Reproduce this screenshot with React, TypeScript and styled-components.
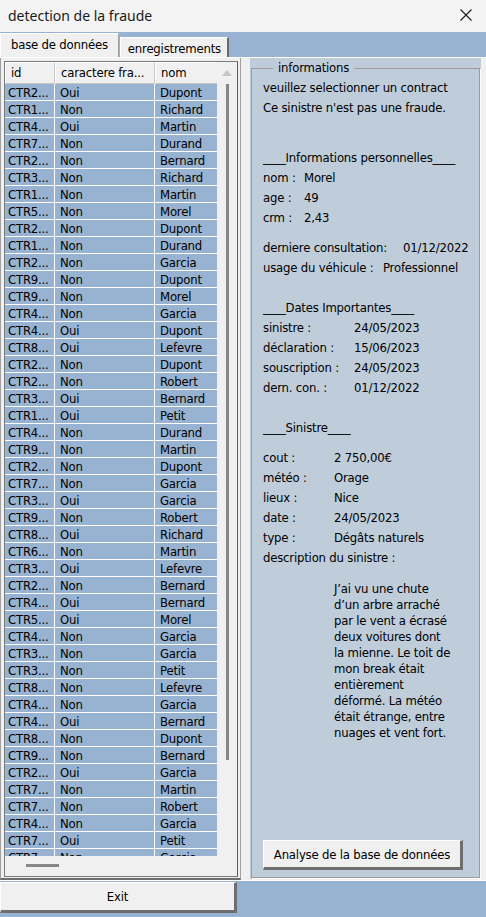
import React from "react";
import styled, { createGlobalStyle } from "styled-components";

const FONT = `"DejaVu Sans Condensed", "DejaVu Sans", sans-serif`;
const BLUE = "#98b3d1";
const GREY = "#f0f0f0";
const FRAME = "#bfcddb";

const GlobalStyle = createGlobalStyle`
  html, body { margin: 0; padding: 0; }
  body { width: 486px; height: 917px; overflow: hidden; background: ${GREY}; }
  * { box-sizing: border-box; }
`;

const Window = styled.div`
  width: 486px;
  height: 917px;
  display: grid;
  grid-template-rows: 32px 25px 823px 37px;
  font-family: ${FONT};
  font-size: 13px;
  letter-spacing: -0.2px;
  color: #000;
`;

const TitleBar = styled.div`
  background: #f3f3f3;
  display: flex;
  align-items: center;
  justify-content: space-between;
  padding: 0 14px 2px 8px;
`;

const Title = styled.span`
  font-family: "Noto Sans", "Open Sans", sans-serif;
  font-size: 14px;
  letter-spacing: 0;
  color: #1a1a1a;
`;

const CloseIcon = styled.svg`
  width: 12px;
  height: 12px;
  display: block;
`;

const TabStrip = styled.div`
  background: ${BLUE};
  display: flex;
  align-items: flex-end;
  padding-top: 1px;
`;

const Tab = styled.div<{ $active?: boolean }>`
  background: ${GREY};
  height: ${(p) => (p.$active ? "24px" : "20px")};
  padding: ${(p) => (p.$active ? "3px 10px 0 10px" : "3px 6px 0 7px")};
  border-top: 1px solid #fff;
  border-left: 1px solid #fff;
  border-right: ${(p) => (p.$active ? "1px solid #a0a0a0" : "2px solid #6b6b6b")};
  margin-left: ${(p) => (p.$active ? "0" : "1px")};
  white-space: nowrap;
  line-height: 15px;
`;

const Body = styled.div`
  display: flex;
  background: ${GREY};
  border-top: 1px solid #fff;
`;

const LeftPage = styled.div`
  width: 241px;
  display: flex;
  padding: 3px 2px 1px 3px;
  border-left: 1px solid #a0a0a0;
  border-right: 1px solid #a0a0a0;
  border-bottom: 2px solid #6d6d6d;
`;

const ListView = styled.div`
  flex: 1;
  display: grid;
  grid-template-columns: 1fr 20px;
  grid-template-rows: 1fr 20px;
  border: 1px solid #7a7a7a;
  border-right-color: #5a5a5a;
  background: ${GREY};
  overflow: hidden;
`;

const Viewport = styled.div`
  overflow: hidden;
`;

const COLS = "50px 100px 63px";

const HeaderRow = styled.div`
  display: grid;
  grid-template-columns: ${COLS};
  height: 22px;
`;

const HeaderCell = styled.div`
  background: ${GREY};
  border-top: 1px solid #fff;
  border-left: 1px solid #fff;
  border-right: 1px solid #c8c8c8;
  border-bottom: 1px solid #c8c8c8;
  padding-left: 5px;
  line-height: 19px;
  white-space: nowrap;
  overflow: hidden;
`;

const Row = styled.div`
  display: grid;
  grid-template-columns: ${COLS};
  height: 17px;
`;

const Cell = styled.div<{ $pad: number }>`
  background: ${BLUE};
  border-right: 1px solid #fff;
  border-bottom: 1px solid #fff;
  padding-left: ${(p) => p.$pad}px;
  line-height: 17px;
  white-space: nowrap;
  overflow: hidden;
`;

const VScroll = styled.div`
  display: flex;
  flex-direction: column;
  align-items: center;
  padding-top: 8px;
`;

const UpArrow = styled.div`
  width: 0;
  height: 0;
  border-left: 5px solid transparent;
  border-right: 5px solid transparent;
  border-bottom: 6px solid #c6c6c6;
`;

const VThumb = styled.div`
  width: 3px;
  height: 676px;
  margin-top: 8px;
  background: #878787;
`;

const HScroll = styled.div`
  padding: 8px 0 0 21px;
`;

const HThumb = styled.div`
  width: 33px;
  height: 3px;
  background: #878787;
`;

const RightFrame = styled.div`
  width: 231px;
  margin-left: 9px;
  margin-bottom: 1px;
  background: ${FRAME};
  padding: 2px 1px 1px 1px;
  display: flex;
`;

const Fieldset = styled.fieldset`
  flex: 1;
  margin: 0;
  min-width: 0;
  border: 1px solid #9c9c9c;
  box-shadow: 1px 1px 0 #fff;
  padding: 0 6px 7px 11px;
  display: flex;
  flex-direction: column;
`;

const Legend = styled.legend`
  margin-left: 10px;
  padding: 0 5px;
  line-height: 16px;
  font-size: 13px;
`;

const Content = styled.div`
  flex: 1;
  display: flex;
  flex-direction: column;
  padding-top: 2px;
`;

const Line = styled.div<{ $top?: number }>`
  display: flex;
  height: 20px;
  line-height: 20px;
  margin-top: ${(p) => p.$top ?? 0}px;
  white-space: nowrap;
`;

const Label = styled.span<{ $w?: number }>`
  width: ${(p) => (p.$w ? `${p.$w}px` : "auto")};
  flex: none;
`;

const Paragraph = styled.div`
  margin-top: 13px;
  margin-left: 71px;
  line-height: 16px;
  white-space: pre-line;
`;

const WinButton = styled.button<{ $w: number; $h: number }>`
  width: ${(p) => p.$w}px;
  height: ${(p) => p.$h}px;
  background: ${GREY};
  font-family: ${FONT};
  font-size: 13px;
  letter-spacing: -0.2px;
  color: #000;
  border: none;
  border-top: 1px solid #fff;
  border-left: 1px solid #fff;
  border-right: 3px solid #6e6e6e;
  border-bottom: 3px solid #6e6e6e;
  padding: 0;
  margin: 0;
`;

const AnalyseButton = styled(WinButton)`
  margin-top: auto;
  align-self: flex-start;
`;

const Footer = styled.div`
  background: ${BLUE};
  padding-top: 1px;
  border-top: 1px solid #fff;
`;

const rows: [string, string, string][] = [
  ["CTR2...", "Oui", "Dupont"],
  ["CTR1...", "Non", "Richard"],
  ["CTR4...", "Oui", "Martin"],
  ["CTR7...", "Non", "Durand"],
  ["CTR2...", "Non", "Bernard"],
  ["CTR3...", "Non", "Richard"],
  ["CTR1...", "Non", "Martin"],
  ["CTR5...", "Non", "Morel"],
  ["CTR2...", "Non", "Dupont"],
  ["CTR1...", "Non", "Durand"],
  ["CTR2...", "Non", "Garcia"],
  ["CTR9...", "Non", "Dupont"],
  ["CTR9...", "Non", "Morel"],
  ["CTR4...", "Non", "Garcia"],
  ["CTR4...", "Oui", "Dupont"],
  ["CTR8...", "Oui", "Lefevre"],
  ["CTR2...", "Non", "Dupont"],
  ["CTR2...", "Non", "Robert"],
  ["CTR3...", "Oui", "Bernard"],
  ["CTR1...", "Oui", "Petit"],
  ["CTR4...", "Non", "Durand"],
  ["CTR9...", "Non", "Martin"],
  ["CTR2...", "Non", "Dupont"],
  ["CTR7...", "Non", "Garcia"],
  ["CTR3...", "Oui", "Garcia"],
  ["CTR9...", "Non", "Robert"],
  ["CTR8...", "Oui", "Richard"],
  ["CTR6...", "Non", "Martin"],
  ["CTR3...", "Oui", "Lefevre"],
  ["CTR2...", "Non", "Bernard"],
  ["CTR4...", "Oui", "Bernard"],
  ["CTR5...", "Oui", "Morel"],
  ["CTR4...", "Non", "Garcia"],
  ["CTR3...", "Non", "Garcia"],
  ["CTR3...", "Non", "Petit"],
  ["CTR8...", "Non", "Lefevre"],
  ["CTR4...", "Non", "Garcia"],
  ["CTR4...", "Oui", "Bernard"],
  ["CTR8...", "Non", "Dupont"],
  ["CTR9...", "Non", "Bernard"],
  ["CTR2...", "Oui", "Garcia"],
  ["CTR7...", "Non", "Martin"],
  ["CTR7...", "Non", "Robert"],
  ["CTR4...", "Non", "Garcia"],
  ["CTR7...", "Oui", "Petit"],
  ["CTR7...", "Non", "Garcia"],
];

const description = `J’ai vu une chute
d’un arbre arraché
par le vent a écrasé
deux voitures dont
la mienne. Le toit de
mon break était
entièrement
déformé. La météo
était étrange, entre
nuages et vent fort.`;

export default function App() {
  return (
    <>
      <GlobalStyle />
      <Window>
        <TitleBar>
          <Title>detection de la fraude</Title>
          <CloseIcon viewBox="0 0 12 12">
            <path d="M0.5 0.5 L11.5 11.5 M11.5 0.5 L0.5 11.5" stroke="#1a1a1a" strokeWidth="1.1" fill="none" />
          </CloseIcon>
        </TitleBar>
        <TabStrip>
          <Tab $active>base de données</Tab>
          <Tab>enregistrements</Tab>
        </TabStrip>
        <Body>
          <LeftPage>
            <ListView>
              <Viewport>
                <HeaderRow>
                  <HeaderCell>id</HeaderCell>
                  <HeaderCell>caractere fra...</HeaderCell>
                  <HeaderCell>nom</HeaderCell>
                </HeaderRow>
                {rows.map((r, i) => (
                  <Row key={i}>
                    <Cell $pad={3}>{r[0]}</Cell>
                    <Cell $pad={5}>{r[1]}</Cell>
                    <Cell $pad={5}>{r[2]}</Cell>
                  </Row>
                ))}
              </Viewport>
              <VScroll>
                <UpArrow />
                <VThumb />
              </VScroll>
              <HScroll>
                <HThumb />
              </HScroll>
              <div />
            </ListView>
          </LeftPage>
          <RightFrame>
            <Fieldset>
              <Legend>informations</Legend>
              <Content>
                <Line>veuillez selectionner un contract</Line>
                <Line>Ce sinistre n'est pas une fraude.</Line>
                <Line $top={30}>____Informations personnelles____</Line>
                <Line><Label $w={41}>nom :</Label>Morel</Line>
                <Line><Label $w={41}>age :</Label>49</Line>
                <Line><Label $w={41}>crm :</Label>2,43</Line>
                <Line $top={10}><Label $w={140}>derniere consultation:</Label>01/12/2022</Line>
                <Line><Label $w={120}>usage du véhicule :</Label>Professionnel</Line>
                <Line $top={20}>____Dates Importantes____</Line>
                <Line><Label $w={91}>sinistre :</Label>24/05/2023</Line>
                <Line><Label $w={91}>déclaration :</Label>15/06/2023</Line>
                <Line><Label $w={91}>souscription :</Label>24/05/2023</Line>
                <Line><Label $w={91}>dern. con. :</Label>01/12/2022</Line>
                <Line $top={20}>____Sinistre____</Line>
                <Line $top={10}><Label $w={71}>cout :</Label>2 750,00€</Line>
                <Line><Label $w={71}>météo :</Label>Orage</Line>
                <Line><Label $w={71}>lieux :</Label>Nice</Line>
                <Line><Label $w={71}>date :</Label>24/05/2023</Line>
                <Line><Label $w={71}>type :</Label>Dégâts naturels</Line>
                <Line>description du sinistre :</Line>
                <Paragraph>{description}</Paragraph>
                <AnalyseButton $w={200} $h={30}>Analyse de la base de données</AnalyseButton>
              </Content>
            </Fieldset>
          </RightFrame>
        </Body>
        <Footer>
          <WinButton $w={237} $h={31}>Exit</WinButton>
        </Footer>
      </Window>
    </>
  );
}
